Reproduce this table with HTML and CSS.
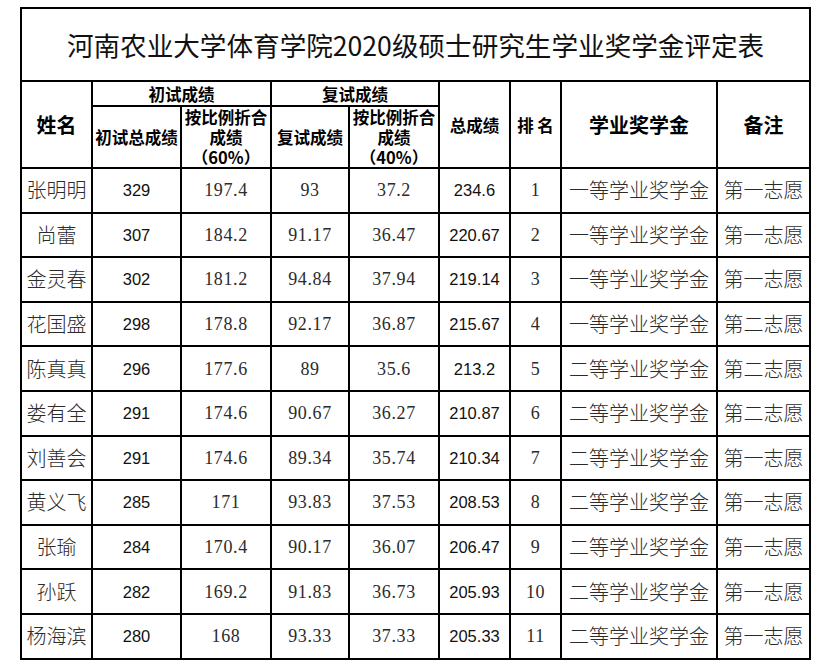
FILE: index.html
```html
<!DOCTYPE html>
<html lang="zh-CN">
<head>
<meta charset="utf-8">
<title>河南农业大学体育学院2020级硕士研究生学业奖学金评定表</title>
<link rel="stylesheet" href="styles.css">
</head>
<body>
<table class="sheet">
  <colgroup>
    <col class="c-name">
    <col class="c-pre">
    <col class="c-pre60">
    <col class="c-re">
    <col class="c-re40">
    <col class="c-total">
    <col class="c-rank">
    <col class="c-award">
    <col class="c-note">
  </colgroup>
  <tr class="r-title">
    <td colspan="9" class="title">河南农业大学体育学院2020级硕士研究生学业奖学金评定表</td>
  </tr>
  <tr class="r-h1">
    <th rowspan="2" class="h-big">姓名</th>
    <th colspan="2" class="h-sm">初试成绩</th>
    <th colspan="2" class="h-sm">复试成绩</th>
    <th rowspan="2" class="h-sm h-sans">总成绩</th>
    <th rowspan="2" class="h-sm h-sans">排 名</th>
    <th rowspan="2" class="h-big">学业奖学金</th>
    <th rowspan="2" class="h-big">备注</th>
  </tr>
  <tr class="r-h2">
    <th class="h-sm">初试总成绩</th>
    <th class="h-sm h-ml"><span class="ln">按比例折合</span><span class="ln">成绩</span><span class="ln">（60%）</span></th>
    <th class="h-sm">复试成绩</th>
    <th class="h-sm h-ml"><span class="ln">按比例折合</span><span class="ln">成绩</span><span class="ln">（40%）</span></th>
  </tr>
  <tr class="row"><td class="cn">张明明</td><td class="sans">329</td><td class="num">197.4</td><td class="num">93</td><td class="num">37.2</td><td class="sans">234.6</td><td class="num">1</td><td class="cn">一等学业奖学金</td><td class="cn">第一志愿</td></tr>
  <tr class="row"><td class="cn">尚蕾</td><td class="sans">307</td><td class="num">184.2</td><td class="num">91.17</td><td class="num">36.47</td><td class="sans">220.67</td><td class="num">2</td><td class="cn">一等学业奖学金</td><td class="cn">第一志愿</td></tr>
  <tr class="row"><td class="cn">金灵春</td><td class="sans">302</td><td class="num">181.2</td><td class="num">94.84</td><td class="num">37.94</td><td class="sans">219.14</td><td class="num">3</td><td class="cn">一等学业奖学金</td><td class="cn">第一志愿</td></tr>
  <tr class="row"><td class="cn">花国盛</td><td class="sans">298</td><td class="num">178.8</td><td class="num">92.17</td><td class="num">36.87</td><td class="sans">215.67</td><td class="num">4</td><td class="cn">一等学业奖学金</td><td class="cn">第二志愿</td></tr>
  <tr class="row"><td class="cn">陈真真</td><td class="sans">296</td><td class="num">177.6</td><td class="num">89</td><td class="num">35.6</td><td class="sans">213.2</td><td class="num">5</td><td class="cn">二等学业奖学金</td><td class="cn">第二志愿</td></tr>
  <tr class="row"><td class="cn">娄有全</td><td class="sans">291</td><td class="num">174.6</td><td class="num">90.67</td><td class="num">36.27</td><td class="sans">210.87</td><td class="num">6</td><td class="cn">二等学业奖学金</td><td class="cn">第二志愿</td></tr>
  <tr class="row"><td class="cn">刘善会</td><td class="sans">291</td><td class="num">174.6</td><td class="num">89.34</td><td class="num">35.74</td><td class="sans">210.34</td><td class="num">7</td><td class="cn">二等学业奖学金</td><td class="cn">第一志愿</td></tr>
  <tr class="row"><td class="cn">黄义飞</td><td class="sans">285</td><td class="num">171</td><td class="num">93.83</td><td class="num">37.53</td><td class="sans">208.53</td><td class="num">8</td><td class="cn">二等学业奖学金</td><td class="cn">第一志愿</td></tr>
  <tr class="row"><td class="cn">张瑜</td><td class="sans">284</td><td class="num">170.4</td><td class="num">90.17</td><td class="num">36.07</td><td class="sans">206.47</td><td class="num">9</td><td class="cn">二等学业奖学金</td><td class="cn">第一志愿</td></tr>
  <tr class="row"><td class="cn">孙跃</td><td class="sans">282</td><td class="num">169.2</td><td class="num">91.83</td><td class="num">36.73</td><td class="sans">205.93</td><td class="num">10</td><td class="cn">二等学业奖学金</td><td class="cn">第一志愿</td></tr>
  <tr class="row"><td class="cn">杨海滨</td><td class="sans">280</td><td class="num">168</td><td class="num">93.33</td><td class="num">37.33</td><td class="sans">205.33</td><td class="num">11</td><td class="cn">二等学业奖学金</td><td class="cn">第一志愿</td></tr>
</table>
</body>
</html>
```
FILE: styles.css
```css
html, body {
  margin: 0;
  padding: 0;
  background: #fff;
}

body {
  font-family: "Noto Sans CJK SC", "Noto Sans", sans-serif;
  color: #000;
}

.sheet {
  border-collapse: collapse;
  table-layout: fixed;
  width: 789px;
  margin: 7px 0 0 20px;
}

.c-name { width: 71px; }
.c-pre { width: 89px; }
.c-pre60 { width: 90px; }
.c-re { width: 78px; }
.c-re40 { width: 90px; }
.c-total { width: 71px; }
.c-rank { width: 51px; }
.c-award { width: 156px; }
.c-note { width: 93px; }

.sheet td,
.sheet th {
  border: 2px solid #000;
  padding: 0;
  text-align: center;
  vertical-align: middle;
  white-space: nowrap;
  overflow: hidden;
}

.r-title { height: 73px; }
.r-h1 { height: 25px; }
.r-h2 { height: 62px; }
.row { height: 44.6px; }

.title {
  font-size: 26.6px;
  font-weight: 400;
  color: #111;
  line-height: 34px;
}

.h-big {
  font-size: 20px;
  font-weight: 700;
  line-height: 26px;
  padding-top: 6px;
}

.h-sm {
  font-size: 16.5px;
  font-weight: 700;
  line-height: 20px;
}

.h-ml {
  padding-top: 1px;
}

.ln {
  display: block;
  height: 20px;
  line-height: 20px;
}

.h-sans {
  padding-top: 6px;
}

.cn {
  font-size: 20px;
  font-weight: 300;
  line-height: 26px;
  color: #2b2b2b;
}

.num {
  font-family: "Liberation Serif", serif;
  font-size: 18px;
  line-height: 22px;
  letter-spacing: 0.6px;
  color: #2b2b2b;
}

.sans {
  font-family: "Liberation Sans", sans-serif;
  font-size: 16.5px;
  line-height: 20px;
  color: #111;
  padding-bottom: 3px;
}
```
